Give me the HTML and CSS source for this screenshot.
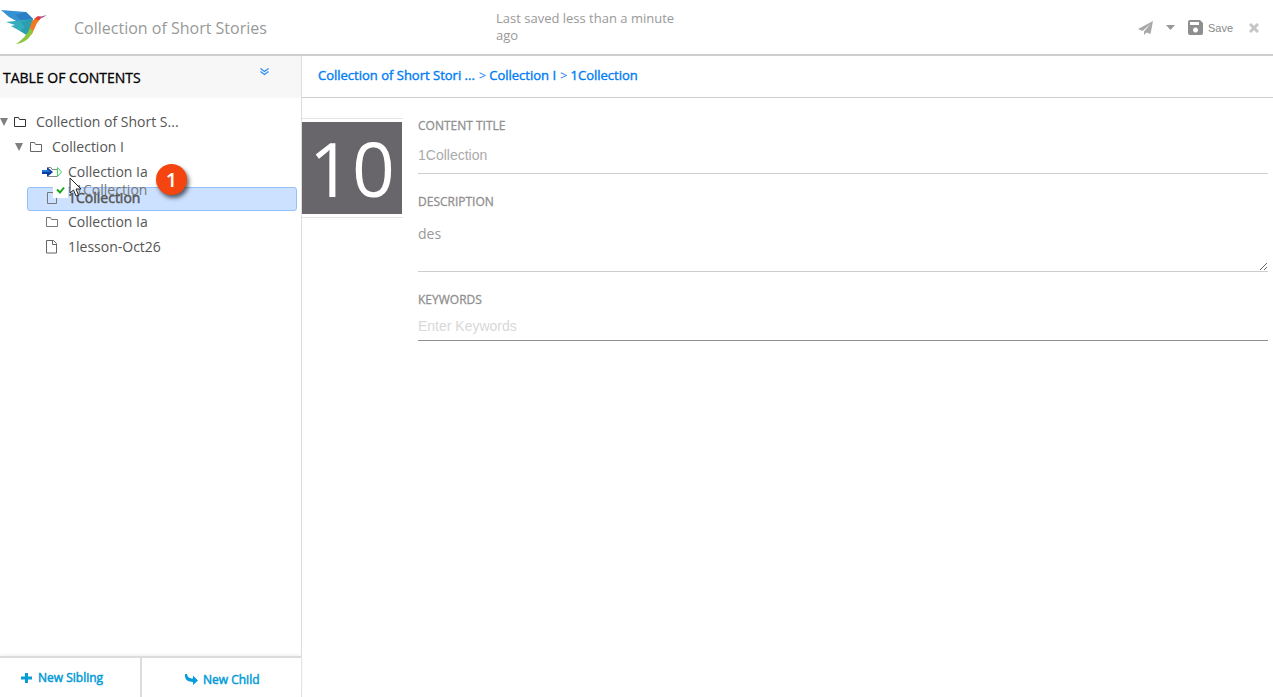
FILE: index.html
```html
<!DOCTYPE html>
<html lang="en">
<head>
<meta charset="utf-8">
<meta name="viewport" content="width=device-width, initial-scale=1">
<title>Collection of Short Stories</title>
<link rel="stylesheet" href="styles.css">
</head>
<body>
<div class="app">
  <header class="topbar">
    <svg class="logo" width="47" height="36" viewBox="0 0 47 36" aria-hidden="true">
      <path d="M1 0 26 2 33 9 27 17 9 7z" fill="#3591d2"/>
      <path d="M16 5 26 2 33 9 27 17z" fill="#2b7fc4"/>
      <path d="M6 12 33 9 29 23 20 21 11 16 15 15z" fill="#35aebc"/>
      <path d="M20 12 33 9 28 26 20 21 25 17z" fill="#2b9fb0"/>
      <path d="M32 11 36 8 42 7 37 13 32 24 27 27z" fill="#ef7a24"/>
      <path d="M34 9 38 6 42 7 39 10z" fill="#e23b3b"/>
      <path d="M39 7 47 5 42 8z" fill="#a855a0"/>
      <path d="M30 18 33 21C30 28 25 33 16 34 22 30 27 25 30 18z" fill="#8cc63f"/>
    </svg>
    <h1 class="doc-title">Collection of Short Stories</h1>
    <p class="saved">Last saved less than a minute ago</p>
    <div class="actions">
      <button class="icon-btn send" type="button" aria-label="Send">
        <svg width="15" height="14" viewBox="0 0 15 14"><path d="M15 0 12.500 13 8.500 11.500 6 14V10.500L12.500 3 4.500 10 0 8z" fill="#a9a9a9"/></svg>
      </button>
      <button class="icon-btn more" type="button" aria-label="More options">
        <svg width="9" height="5" viewBox="0 0 9 5"><path d="M0 0h9L4.500 5z" fill="#999"/></svg>
      </button>
      <button class="icon-btn save" type="button">
        <svg width="15" height="15" viewBox="0 0 15 15"><path fill-rule="evenodd" d="M2 0h10l3 3v10a2 2 0 0 1-2 2H2a2 2 0 0 1-2-2V2a2 2 0 0 1 2-2zM2 2v3h9V2zM7.500 7.500a2.500 2.500 0 1 0 .01 0z" fill="#8e8e8e"/></svg>
        Save
      </button>
      <button class="icon-btn close" type="button" aria-label="Close">
        <svg width="10" height="10" viewBox="0 0 10 10"><path d="M1 1l8 8M9 1l-8 8" stroke="#c6c6c6" stroke-width="3"/></svg>
      </button>
    </div>
  </header>

  <div class="workspace">
    <aside class="sidebar">
      <div class="toc-head">
        <h2 class="toc-title">TABLE OF CONTENTS</h2>
        <button class="icon-btn collapse" type="button" aria-label="Collapse all">
          <svg width="9" height="8" viewBox="0 0 9 8"><path d="M.5.500l4 3 4-3M.5 3.500l4 3 4-3" fill="none" stroke="#2f8ff5" stroke-width="1.300"/></svg>
        </button>
      </div>
      <ul class="tree">
        <li class="node level-0">
          <svg class="caret" width="9" height="8" viewBox="0 0 9 8"><path d="M0 0h8L4 8z" fill="#808080"/></svg>
          <svg class="glyph" width="14" height="12" viewBox="0 0 14 12"><path d="M1.500 10.500v-9h4l1 2h6v7z" fill="none" stroke="#333"/></svg>
          <span>Collection of Short S...</span>
        </li>
        <li class="node level-1">
          <svg class="caret" width="9" height="8" viewBox="0 0 9 8"><path d="M0 0h8L4 8z" fill="#808080"/></svg>
          <svg class="glyph" width="14" height="12" viewBox="0 0 14 12"><path d="M1.500 10.500v-9h4l1 2h6v7z" fill="none" stroke="#666"/></svg>
          <span>Collection I</span>
        </li>
        <li class="node level-2">
          <svg class="glyph" width="14" height="12" viewBox="0 0 14 12"><path d="M3 1.500h3l1 2h6M3 10.500h9" fill="none" stroke="#888"/></svg>
          <span>Collection Ia</span>
          <svg class="drop-marker" width="21" height="12" viewBox="0 0 21 12"><path d="M0 4h5V1l6 5-6 5V8H0z" fill="#0d3d98"/><path d="M0 4h6l3 2H0z" fill="#1d78dd"/><path d="M15.500 1.500v9l4-4.500z" fill="#fff" stroke="#3ed662"/></svg>
          <span class="callout">1</span>
        </li>
        <li class="node level-2 selected">
          <svg class="glyph" width="14" height="14" viewBox="0 0 14 14"><path d="M2.500 1.500h6l3 3v8h-9zM8.500 1.500v3h3" fill="none" stroke="#777"/></svg>
          <span>1Collection</span>
          <span class="drag-ghost">
            <svg class="tick" width="15" height="15" viewBox="0 0 15 15"><path d="M0 0h15v15H0z" fill="#fff"/><path d="M4 6.500l3 3 4-5" fill="none" stroke="#1ca51c" stroke-width="2"/></svg>
            1Collection
          </span>
          <svg class="pointer" width="13" height="20" viewBox="0 0 13 20"><path d="M1 1v15l3.500-3 2.500 6 2.500-1L7 12h5z" fill="#fff" stroke="#222"/></svg>
        </li>
        <li class="node level-2">
          <svg class="glyph" width="14" height="12" viewBox="0 0 14 12"><path d="M1.500 10.500v-9h4l1 2h6v7z" fill="none" stroke="#777"/></svg>
          <span>Collection Ia</span>
        </li>
        <li class="node level-2">
          <svg class="glyph" width="14" height="14" viewBox="0 0 14 14"><path d="M1.500.500h7l3 3v9.500h-10zM7.500.500v4h4" fill="none" stroke="#666"/></svg>
          <span>1lesson-Oct26</span>
        </li>
      </ul>
      <div class="toc-actions">
        <button class="toc-btn sibling" type="button">
          <svg width="11" height="10" viewBox="0 0 11 10"><path d="M4 0h3v3.500h4v3H7V10H4V6.500H0v-3h4z" fill="#069cd8"/></svg>
          New Sibling
        </button>
        <button class="toc-btn child" type="button">
          <svg width="13" height="11" viewBox="0 0 13 11"><path d="M0 0h2C2.500 3 4 4.500 8 4.500V1.500l5 5L8 11V8C2 8-.5 5 0 0z" fill="#069cd8"/></svg>
          New Child
        </button>
      </div>
    </aside>

    <main class="content">
      <nav class="crumbs" aria-label="Breadcrumb">
        <a href="#root">Collection of Short Stori ...</a>
        <span class="sep">&gt;</span>
        <a href="#collection">Collection I</a>
        <span class="sep">&gt;</span>
        <a href="#current">1Collection</a>
      </nav>
      <form class="details">
        <div class="thumb"><div class="thumb-image">10</div></div>
        <div class="fields">
          <label class="label" for="title">CONTENT TITLE</label>
          <input class="field title-field" id="title" type="text" value="1Collection">
          <label class="label" for="desc">DESCRIPTION</label>
          <textarea class="field desc-field" id="desc">des</textarea>
          <label class="label" for="keys">KEYWORDS</label>
          <input class="field keys-field" id="keys" type="text" placeholder="Enter Keywords">
        </div>
      </form>
    </main>
  </div>
</div>
</body>
</html>
```

FILE: styles.css
```css
* { box-sizing: border-box; }

body {
  margin: 0;
  background: #fff;
  color: #555;
  font-family: "Open Sans", "Noto Sans", sans-serif;
  font-size: 14px;
}

button, input, textarea { font: inherit; margin: 0; }
svg { display: block; flex: none; }

.app { display: flex; flex-direction: column; min-height: 100vh; }

/* Top bar */
.topbar {
  display: flex;
  align-items: flex-start;
  height: 56px;
  border-bottom: 2px solid #cecece;
}
.logo { margin: 10px 27px 0 0; }
.doc-title {
  width: 422px;
  margin: 17px 0 0;
  color: #999;
  font-size: 16px;
  font-weight: 400;
  line-height: 22px;
}
.saved {
  width: 190px;
  margin: 10px 0 0;
  color: #999;
  font-size: 13px;
  line-height: 17px;
}
.actions {
  display: flex;
  align-items: center;
  height: 55px;
  margin-left: auto;
  padding-right: 14px;
}
.icon-btn {
  display: flex;
  align-items: center;
  padding: 0;
  border: 0;
  background: none;
  color: #888;
  cursor: pointer;
}
.more { margin-left: 13px; }
.save {
  gap: 5px;
  margin: 0 16px 0 13px;
  font-family: "Liberation Sans", Arial, sans-serif;
  font-size: 11px;
}

/* Sidebar */
.workspace { display: flex; flex: 1; }
.sidebar {
  display: flex;
  flex-direction: column;
  width: 302px;
  border-right: 1px solid #dcdcdc;
}
.toc-head {
  display: flex;
  justify-content: space-between;
  align-items: flex-start;
  height: 42px;
  padding: 12px 32px 0 3px;
  background: #f7f7f7;
}
.toc-title {
  margin: 0;
  color: #000;
  font-size: 14px;
  font-weight: 400;
  line-height: 20px;
  -webkit-text-stroke: 0.3px;
}
.tree {
  flex: 1;
  margin: 0;
  padding: 11px 4px 0 0;
  list-style: none;
}
.node {
  position: relative;
  display: flex;
  align-items: center;
  height: 25px;
  line-height: 24px;
}
.caret { margin-right: 4px; }
.glyph { margin-right: 9px; }
.level-1 { padding-left: 15px; }
.level-1 .caret { margin-right: 5px; }
.level-2 { padding-left: 45px; }
.selected {
  height: 24px;
  margin: 3px 0 -2px 27px;
  padding: 0 0 2px 17px;
  border: 1px solid #93c1f9;
  border-radius: 3px;
  background: #cce1ff;
  -webkit-text-stroke: 0.5px;
}
.drop-marker { position: absolute; left: 42px; top: 7px; }
.callout {
  position: absolute;
  left: 156px;
  top: 5px;
  z-index: 2;
  width: 31px;
  height: 31px;
  border-radius: 50%;
  background: #f4440f;
  box-shadow: 2px 3px 4px rgba(0, 0, 0, 0.6);
  color: #fff;
  font-size: 20px;
  font-weight: 600;
  line-height: 31px;
  text-align: center;
}
.drag-ghost {
  position: absolute;
  left: 25px;
  top: -8px;
  display: flex;
  align-items: center;
  gap: 7px;
  height: 20px;
  color: #777;
  -webkit-text-stroke: 0;
}
.pointer { position: absolute; left: 41px; top: -11px; }

.toc-actions {
  display: grid;
  grid-template-columns: 142px 1fr;
  height: 41px;
  border-top: 2px solid #dcdcdc;
  box-shadow: 0 -1px 3px #eee;
}
.toc-btn {
  display: flex;
  align-items: center;
  border: 0;
  background: #fff;
  color: #069cd8;
  font-size: 12px;
  -webkit-text-stroke: 0.5px;
  cursor: pointer;
}
.sibling {
  gap: 6px;
  padding: 0 0 0 21px;
  border-right: 2px solid #dcdcdc;
}
.child { gap: 5px; padding: 4px 0 0 43px; }

/* Main panel */
.content { flex: 1; min-width: 0; }
.crumbs {
  display: flex;
  height: 42px;
  padding: 9px 16px 0;
  border-bottom: 1px solid #cecece;
  color: #1a7fee;
  font-size: 13px;
  line-height: 20px;
}
.crumbs a {
  color: #007df5;
  text-decoration: none;
  -webkit-text-stroke: 0.4px;
}
.sep { margin: 0 3px 0 4px; }
.details { display: flex; padding: 20px 5px 0 0; }
.thumb {
  flex: none;
  align-self: flex-start;
  width: 101px;
  margin-right: 15px;
  padding: 3px 1px 3px 0;
  border: solid #e4e4e4;
  border-width: 1px 0;
}
.thumb-image {
  height: 92px;
  background: #69666b;
  color: #fff;
  font-size: 75px;
  line-height: 92px;
  text-align: center;
}
.fields { display: flex; flex: 1; flex-direction: column; min-width: 0; }
.label {
  color: #909090;
  font-size: 12px;
  line-height: 16px;
  -webkit-text-stroke: 0.3px;
}
.field {
  display: block;
  width: 100%;
  padding: 0;
  border: 0;
  border-bottom: 1px solid #cecece;
  border-radius: 0;
  outline: 0;
  background: transparent;
  color: #999;
}
.title-field {
  height: 40px;
  margin-bottom: 20px;
  padding-top: 2px;
  color: #aaa;
  font-family: "Liberation Sans", Arial, sans-serif;
}
.desc-field {
  height: 62px;
  margin-bottom: 20px;
  padding-top: 14px;
  line-height: 20px;
  resize: vertical;
}
.keys-field {
  height: 33px;
  padding-top: 4px;
  border-color: #909090;
  font-family: "Liberation Sans", Arial, sans-serif;
}
.keys-field::placeholder { color: #d8d8d8; opacity: 1; }
```
